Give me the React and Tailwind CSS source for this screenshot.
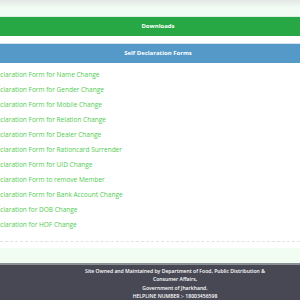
const forms = [
  'Declaration Form for Name Change',
  'Declaration Form for Gender Change',
  'Declaration Form for Mobile Change',
  'Declaration Form for Relation Change',
  'Declaration Form for Dealer Change',
  'Declaration Form for Rationcard Surrender',
  'Declaration Form for UID Change',
  'Declaration Form to remove Member',
  'Declaration Form for Bank Account Change',
  'Declaration for DOB Change',
  'Declaration for HOF Change',
]

export default function App() {
  return (
    <div className="w-[300px] h-[300px] overflow-hidden bg-white font-['Open_Sans',sans-serif]">
      <div className="h-[17px] bg-gradient-to-b from-[#e4e8e6] via-[#f2fcf4] to-[#f2fcf4] border-b border-[#e0efe3]" />
      <div className="ml-[-16px] w-[348px]">
        <div className="h-[19px] bg-[#28a745] flex items-center justify-center text-white text-[6px] font-bold">
          Downloads
        </div>
        <div className="h-[7px] bg-white" />
        <div className="h-[20px] bg-[#5499c7] border-t border-[#d6e2ec] flex items-center justify-center text-white text-[6px] font-bold">
          Self Declaration Forms
        </div>
        <ul className="pt-[4px] pl-[8px]">
          {forms.map(f => (
            <li key={f} className="leading-[15px] text-[6.5px] text-[#4fcc4f]">{f}</li>
          ))}
        </ul>
      </div>
      <div className="mt-[9px] border-t border-dashed border-[#e3e3e3]" />
      <div className="mt-[6px] h-[15px] bg-[#f1fdf3]" />
      <div className="h-[40px] bg-[#484855] border-t-2 border-[#8a8f94] pt-[2px]">
        <div className="ml-[78px] w-[194px] text-center text-white text-[5.1px] font-semibold leading-[8.3px]">
          Site Owned and Maintained by Department of Food, Public Distribution &amp; Consumer Affairs,<br />
          Government of Jharkhand.<br />
          HELPLINE NUMBER :- 18003456598
        </div>
      </div>
    </div>
  )
}
